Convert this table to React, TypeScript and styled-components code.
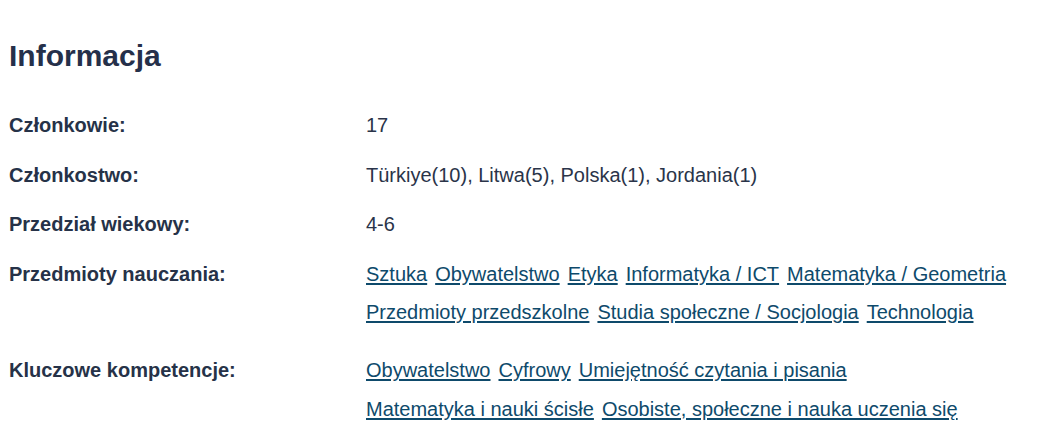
import React from "react";
import styled, { createGlobalStyle } from "styled-components";

const GlobalStyle = createGlobalStyle`
  html, body {
    margin: 0;
    padding: 0;
    background: #ffffff;
  }
  body {
    font-family: "Liberation Sans", Arial, sans-serif;
    color: #263248;
  }
`;

const Section = styled.section`
  padding: 38px 8px 20px 9px;
`;

const Title = styled.h2`
  margin: 0 0 36px 0;
  font-size: 30px;
  line-height: 36px;
  font-weight: 700;
  color: #25304a;
`;

const List = styled.dl`
  margin: 0;
  display: grid;
  grid-template-columns: 357px 1fr;
  row-gap: 19.5px;
`;

const Label = styled.dt`
  margin: 0;
  font-size: 20px;
  line-height: 30px;
  font-weight: 700;
  color: #263248;
`;

const Value = styled.dd`
  margin: 0;
  font-size: 20px;
  line-height: 30px;
  color: #2a3449;
`;

const LinkWrap = styled.dd`
  margin: 0;
  display: flex;
  flex-wrap: wrap;
  column-gap: 8px;
  font-size: 20px;
  line-height: 30px;
`;

const Tag = styled.a`
  color: #0e4a6b;
  text-decoration: underline;
  text-underline-offset: 2px;
  margin-bottom: 8.5px;
  cursor: pointer;
`;

const subjects = [
  "Sztuka",
  "Obywatelstwo",
  "Etyka",
  "Informatyka / ICT",
  "Matematyka / Geometria",
  "Przedmioty przedszkolne",
  "Studia społeczne / Socjologia",
  "Technologia",
];

const competences = [
  "Obywatelstwo",
  "Cyfrowy",
  "Umiejętność czytania i pisania",
  "Matematyka i nauki ścisłe",
  "Osobiste, społeczne i nauka uczenia się",
];

export default function App() {
  return (
    <>
      <GlobalStyle />
      <Section>
        <Title>Informacja</Title>
        <List>
          <Label>Członkowie:</Label>
          <Value>17</Value>
          <Label>Członkostwo:</Label>
          <Value>Türkiye(10), Litwa(5), Polska(1), Jordania(1)</Value>
          <Label>Przedział wiekowy:</Label>
          <Value>4-6</Value>
          <Label>Przedmioty nauczania:</Label>
          <LinkWrap>
            {subjects.map((s) => (
              <Tag key={s} href="#">
                {s}
              </Tag>
            ))}
          </LinkWrap>
          <Label>Kluczowe kompetencje:</Label>
          <LinkWrap>
            {competences.map((s) => (
              <Tag key={s} href="#">
                {s}
              </Tag>
            ))}
          </LinkWrap>
        </List>
      </Section>
    </>
  );
}
